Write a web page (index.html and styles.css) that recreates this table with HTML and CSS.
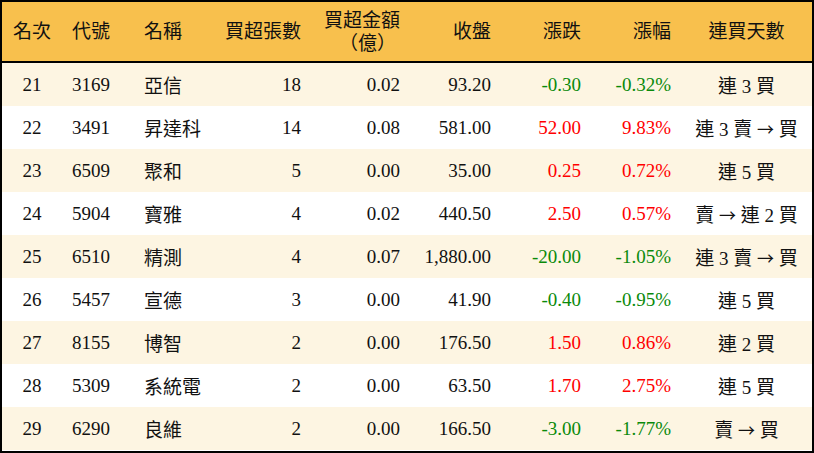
FILE: index.html
```html
<!DOCTYPE html>
<html lang="zh-Hant">
<head>
<meta charset="utf-8">
<link rel="stylesheet" href="styles.css">
</head>
<body>
<div class="frame">
<table class="rank">
  <colgroup>
    <col class="c1"><col class="c2"><col class="c3"><col class="c4"><col class="c5"><col class="c6"><col class="c7"><col class="c8"><col class="c9">
  </colgroup>
  <thead>
    <tr>
      <th class="ctr">名次</th>
      <th class="lft">代號</th>
      <th class="lft nm">名稱</th>
      <th class="rgt">買超張數</th>
      <th class="rgt">買超金額<br><span class="sub">（億）</span></th>
      <th class="rgt">收盤</th>
      <th class="rgt">漲跌</th>
      <th class="rgt">漲幅</th>
      <th class="ctr">連買天數</th>
    </tr>
  </thead>
  <tbody>
    <tr><td class="ctr">21</td><td class="lft">3169</td><td class="lft nm">亞信</td><td class="rgt">18</td><td class="rgt">0.02</td><td class="rgt">93.20</td><td class="rgt dn">-0.30</td><td class="rgt dn">-0.32%</td><td class="ctr">連 3 買</td></tr>
    <tr><td class="ctr">22</td><td class="lft">3491</td><td class="lft nm">昇達科</td><td class="rgt">14</td><td class="rgt">0.08</td><td class="rgt">581.00</td><td class="rgt up">52.00</td><td class="rgt up">9.83%</td><td class="ctr">連 3 賣 <span class="arw">→</span> 買</td></tr>
    <tr><td class="ctr">23</td><td class="lft">6509</td><td class="lft nm">聚和</td><td class="rgt">5</td><td class="rgt">0.00</td><td class="rgt">35.00</td><td class="rgt up">0.25</td><td class="rgt up">0.72%</td><td class="ctr">連 5 買</td></tr>
    <tr><td class="ctr">24</td><td class="lft">5904</td><td class="lft nm">寶雅</td><td class="rgt">4</td><td class="rgt">0.02</td><td class="rgt">440.50</td><td class="rgt up">2.50</td><td class="rgt up">0.57%</td><td class="ctr">賣 <span class="arw">→</span> 連 2 買</td></tr>
    <tr><td class="ctr">25</td><td class="lft">6510</td><td class="lft nm">精測</td><td class="rgt">4</td><td class="rgt">0.07</td><td class="rgt">1,880.00</td><td class="rgt dn">-20.00</td><td class="rgt dn">-1.05%</td><td class="ctr">連 3 賣 <span class="arw">→</span> 買</td></tr>
    <tr><td class="ctr">26</td><td class="lft">5457</td><td class="lft nm">宣德</td><td class="rgt">3</td><td class="rgt">0.00</td><td class="rgt">41.90</td><td class="rgt dn">-0.40</td><td class="rgt dn">-0.95%</td><td class="ctr">連 5 買</td></tr>
    <tr><td class="ctr">27</td><td class="lft">8155</td><td class="lft nm">博智</td><td class="rgt">2</td><td class="rgt">0.00</td><td class="rgt">176.50</td><td class="rgt up">1.50</td><td class="rgt up">0.86%</td><td class="ctr">連 2 買</td></tr>
    <tr><td class="ctr">28</td><td class="lft">5309</td><td class="lft nm">系統電</td><td class="rgt">2</td><td class="rgt">0.00</td><td class="rgt">63.50</td><td class="rgt up">1.70</td><td class="rgt up">2.75%</td><td class="ctr">連 5 買</td></tr>
    <tr><td class="ctr">29</td><td class="lft">6290</td><td class="lft nm">良維</td><td class="rgt">2</td><td class="rgt">0.00</td><td class="rgt">166.50</td><td class="rgt dn">-3.00</td><td class="rgt dn">-1.77%</td><td class="ctr">賣 <span class="arw">→</span> 買</td></tr>
  </tbody>
</table>
</div>
</body>
</html>
```
FILE: styles.css
```css
html, body {
  margin: 0;
  padding: 0;
  background: #ffffff;
}
.frame {
  width: 814px;
  height: 453px;
  box-sizing: border-box;
  border: 2px solid #000;
  background: #fff;
  overflow: hidden;
}
.rank {
  width: 810px;
  border-collapse: collapse;
  table-layout: fixed;
  font-family: "Liberation Serif", "Noto Sans CJK TC", serif;
  font-size: 19px;
  color: #111;
}
.c1 { width: 60px; }
.c2 { width: 70px; }
.c3 { width: 80px; }
.c4 { width: 99px; }
.c5 { width: 99px; }
.c6 { width: 91px; }
.c7 { width: 90px; }
.c8 { width: 90px; }
.c9 { width: 131px; }
.rank th {
  height: 60px;
  background: #f8c04d;
  font-weight: normal;
  line-height: 23px;
  padding: 0;
  border-bottom: 2px solid #000;
  vertical-align: middle;
  box-sizing: border-box;
}
.rank th .sub {
  display: inline-block;
  padding-right: 4px;
}
.rank td {
  height: 43px;
  padding: 0;
  vertical-align: middle;
  white-space: nowrap;
}
.rank tbody tr:nth-child(odd) { background: #fdf5e2; }
.rank tbody tr:nth-child(even) { background: #ffffff; }
.ctr { text-align: center; }
.rank .lft { text-align: left; padding-left: 10px; }
.rank .nm { padding-left: 12px; }
.rank .rgt { text-align: right; padding-right: 10px; }
.up { color: #f00; }
.dn { color: #0a8a0a; }
.arw {
  font-family: "Noto Sans CJK TC", sans-serif;
  font-size: 17px;
}
```
